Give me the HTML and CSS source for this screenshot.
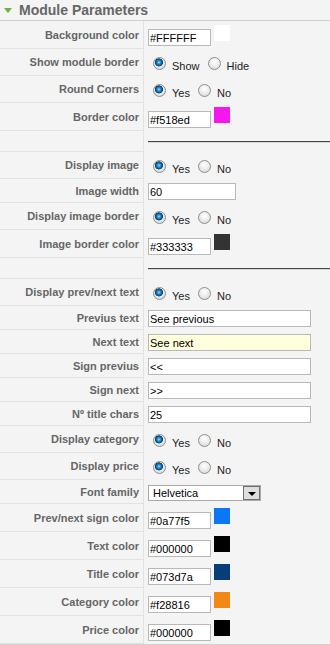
FILE: index.html
```html
<!DOCTYPE html>
<html lang="en">
<head>
    <meta charset="UTF-8">
    <meta name="viewport" content="width=device-width, initial-scale=1.0">
    <title>Module Parameters</title>
    <link rel="stylesheet" href="styles.css">
</head>
<body>
    <div class="panel">
        <h3 class="panel-title"><span class="toggle"></span>Module Parameters</h3>

        <div class="params">
            <!-- Module box -->
            <div class="param param-color">
                <label class="key" for="bgColor">Background color</label>
                <div class="value"><input type="text" class="input input-color" id="bgColor" value="#FFFFFF"><span class="swatch" style="background-color: #FFFFFF"></span></div>
            </div>
            <div class="param param-radio">
                <label class="key">Show module border</label>
                <div class="value">
                    <input type="radio" class="radio" name="showBorder" id="showBorder1" checked><label for="showBorder1">Show</label>
                    <input type="radio" class="radio" name="showBorder" id="showBorder0"><label for="showBorder0">Hide</label>
                </div>
            </div>
            <div class="param param-radio">
                <label class="key">Round Corners</label>
                <div class="value">
                    <input type="radio" class="radio" name="roundCorners" id="roundCorners1" checked><label for="roundCorners1">Yes</label>
                    <input type="radio" class="radio" name="roundCorners" id="roundCorners0"><label for="roundCorners0">No</label>
                </div>
            </div>
            <div class="param param-color">
                <label class="key" for="borderColor">Border color</label>
                <div class="value"><input type="text" class="input input-color" id="borderColor" value="#f518ed"><span class="swatch" style="background-color: #f518ed"></span></div>
            </div>
            <div class="param param-spacer">
                <div class="key"></div>
                <div class="value"><hr class="spacer"></div>
            </div>

            <!-- Image -->
            <div class="param param-radio">
                <label class="key">Display image</label>
                <div class="value">
                    <input type="radio" class="radio" name="displayImage" id="displayImage1" checked><label for="displayImage1">Yes</label>
                    <input type="radio" class="radio" name="displayImage" id="displayImage0"><label for="displayImage0">No</label>
                </div>
            </div>
            <div class="param param-text">
                <label class="key" for="imageWidth">Image width</label>
                <div class="value"><input type="text" class="input input-medium" id="imageWidth" value="60"></div>
            </div>
            <div class="param param-radio">
                <label class="key">Display image border</label>
                <div class="value">
                    <input type="radio" class="radio" name="imageBorder" id="imageBorder1" checked><label for="imageBorder1">Yes</label>
                    <input type="radio" class="radio" name="imageBorder" id="imageBorder0"><label for="imageBorder0">No</label>
                </div>
            </div>
            <div class="param param-color">
                <label class="key" for="imageBorderColor">Image border color</label>
                <div class="value"><input type="text" class="input input-color" id="imageBorderColor" value="#333333"><span class="swatch" style="background-color: #333333"></span></div>
            </div>
            <div class="param param-spacer">
                <div class="key"></div>
                <div class="value"><hr class="spacer"></div>
            </div>

            <!-- Navigation and texts -->
            <div class="param param-radio">
                <label class="key">Display prev/next text</label>
                <div class="value">
                    <input type="radio" class="radio" name="prevNext" id="prevNext1" checked><label for="prevNext1">Yes</label>
                    <input type="radio" class="radio" name="prevNext" id="prevNext0"><label for="prevNext0">No</label>
                </div>
            </div>
            <div class="param param-text">
                <label class="key" for="prevText">Previus text</label>
                <div class="value"><input type="text" class="input input-long" id="prevText" value="See previous"></div>
            </div>
            <div class="param param-text">
                <label class="key" for="nextText">Next text</label>
                <div class="value"><input type="text" class="input input-long input-active" id="nextText" value="See next"></div>
            </div>
            <div class="param param-text">
                <label class="key" for="signPrev">Sign previus</label>
                <div class="value"><input type="text" class="input input-long" id="signPrev" value="&lt;&lt;"></div>
            </div>
            <div class="param param-text">
                <label class="key" for="signNext">Sign next</label>
                <div class="value"><input type="text" class="input input-long" id="signNext" value="&gt;&gt;"></div>
            </div>
            <div class="param param-text">
                <label class="key" for="titleChars">Nº title chars</label>
                <div class="value"><input type="text" class="input input-long" id="titleChars" value="25"></div>
            </div>
            <div class="param param-radio">
                <label class="key">Display category</label>
                <div class="value">
                    <input type="radio" class="radio" name="displayCategory" id="displayCategory1" checked><label for="displayCategory1">Yes</label>
                    <input type="radio" class="radio" name="displayCategory" id="displayCategory0"><label for="displayCategory0">No</label>
                </div>
            </div>
            <div class="param param-radio">
                <label class="key">Display price</label>
                <div class="value">
                    <input type="radio" class="radio" name="displayPrice" id="displayPrice1" checked><label for="displayPrice1">Yes</label>
                    <input type="radio" class="radio" name="displayPrice" id="displayPrice0"><label for="displayPrice0">No</label>
                </div>
            </div>
            <div class="param param-select">
                <label class="key" for="fontFamily">Font family</label>
                <div class="value">
                    <span class="select">
                        <select id="fontFamily">
                            <option>Helvetica</option>
                            <option>Arial</option>
                            <option>Verdana</option>
                        </select>
                        <span class="select-btn"></span>
                    </span>
                </div>
            </div>

            <!-- Colors -->
            <div class="param param-color">
                <label class="key" for="signColor">Prev/next sign color</label>
                <div class="value"><input type="text" class="input input-color" id="signColor" value="#0a77f5"><span class="swatch" style="background-color: #0a77f5"></span></div>
            </div>
            <div class="param param-color">
                <label class="key" for="textColor">Text color</label>
                <div class="value"><input type="text" class="input input-color" id="textColor" value="#000000"><span class="swatch" style="background-color: #000000"></span></div>
            </div>
            <div class="param param-color">
                <label class="key" for="titleColor">Title color</label>
                <div class="value"><input type="text" class="input input-color" id="titleColor" value="#073d7a"><span class="swatch" style="background-color: #073d7a"></span></div>
            </div>
            <div class="param param-color">
                <label class="key" for="categoryColor">Category color</label>
                <div class="value"><input type="text" class="input input-color" id="categoryColor" value="#f28816"><span class="swatch" style="background-color: #f28816"></span></div>
            </div>
            <div class="param param-color">
                <label class="key" for="priceColor">Price color</label>
                <div class="value"><input type="text" class="input input-color" id="priceColor" value="#000000"><span class="swatch" style="background-color: #000000"></span></div>
            </div>
        </div>
    </div>
</body>
</html>
```

FILE: styles.css
```css
body {
    margin: 0;
    padding: 0;
    background-color: #f4f4f4;
    font-family: "Liberation Sans", Arial, sans-serif;
    font-size: 11px;
    color: #222;
}

/* Panel header */
.panel-title {
    margin: 0;
    height: 20px;
    line-height: 20px;
    font-size: 14px;
    font-weight: bold;
    color: #666;
    border-bottom: 1px solid #cfcfcf;
}
.panel-title .toggle {
    display: inline-block;
    width: 0;
    height: 0;
    border-left: 4px solid transparent;
    border-right: 4px solid transparent;
    border-top: 5px solid #6cb23c;
    margin: 0 7px 0 4px;
    vertical-align: 2px;
}

.params {
    border-bottom: 1px solid #cfcfcf;
}

/* One row: key on the left, field on the right */
.param {
    display: flex;
}
.param .key {
    box-sizing: border-box;
    width: 144px;
    flex-shrink: 0;
    display: flex;
    align-items: center;
    justify-content: flex-end;
    padding-right: 4px;
    background-color: #f4f4f4;
    border-right: 1px solid #e2e2e2;
    border-bottom: 1px solid #e2e2e2;
    font-weight: bold;
    color: #666;
}
.param .value {
    flex: 1;
    display: flex;
    align-items: flex-start;
    padding-left: 4px;
}

.param-color { height: 28px; }
.param-color .value { padding-top: 4px; }
.param-radio { height: 27px; }
.param-radio .value { padding-top: 8px; }
.param-text { height: 24px; }
.param-text .value { padding-top: 4px; }
.param-select { height: 24px; }
.param-select .value { padding-top: 5px; }
.param-spacer { height: 21px; }
.param-spacer .value { display: block; padding-top: 10px; }

/* Text inputs */
.input {
    box-sizing: border-box;
    height: 17px;
    margin: 0;
    padding: 0 1px;
    border: 1px solid #b9b9b9;
    background-color: #fff;
    font-family: "Liberation Sans", Arial, sans-serif;
    font-size: 11px;
    color: #000;
}
.input-color {
    width: 63px;
    margin-top: 4px;
}
.input-medium { width: 88px; }
.input-long { width: 163px; }
.input-active { background-color: #ffffdd; }

.swatch {
    width: 16px;
    height: 16px;
    margin-left: 3px;
}

/* Radios */
.radio {
    appearance: none;
    -webkit-appearance: none;
    box-sizing: border-box;
    width: 13px;
    height: 13px;
    margin: 0 6px 0 5px;
    border: 1px solid #8c8e90;
    border-radius: 50%;
    background: radial-gradient(circle at 50% 35%, #ffffff 0, #f0f0f0 40%, #cfd1d3 100%);
}
.radio:checked {
    background:
        radial-gradient(circle at 45% 40%, #9fdcff 0, #2f93d6 1.5px, #0c5d94 3px, #0a3f66 3.8px, transparent 4.3px),
        radial-gradient(circle at 50% 35%, #ffffff 0, #f0f0f0 40%, #cfd1d3 100%);
}
.radio + label {
    margin-top: 3px;
    margin-right: 3px;
    line-height: 13px;
    color: #222;
}

/* Select with boxed arrow button */
.select {
    box-sizing: border-box;
    display: flex;
    width: 113px;
    height: 16px;
    border: 1px solid #a9a9a9;
    background-color: #fff;
}
.select select {
    appearance: none;
    -webkit-appearance: none;
    flex: 1;
    min-width: 0;
    margin: 0;
    padding: 0 0 0 4px;
    border: none;
    background: transparent;
    font-family: "Liberation Sans", Arial, sans-serif;
    font-size: 11px;
    color: #000;
    outline: none;
}
.select-btn {
    box-sizing: border-box;
    width: 17px;
    display: flex;
    align-items: flex-end;
    justify-content: center;
    padding-bottom: 3px;
    border: 1px solid #707070;
    background-color: #dedede;
}
.select-btn::after {
    content: "";
    width: 0;
    height: 0;
    border-left: 4px solid transparent;
    border-right: 4px solid transparent;
    border-top: 4px solid #000;
}

/* Separator between groups */
.spacer {
    height: 0;
    margin: 0;
    border: none;
    border-top: 1px solid #454545;
    border-bottom: 1px solid #d8d8d8;
}
```
